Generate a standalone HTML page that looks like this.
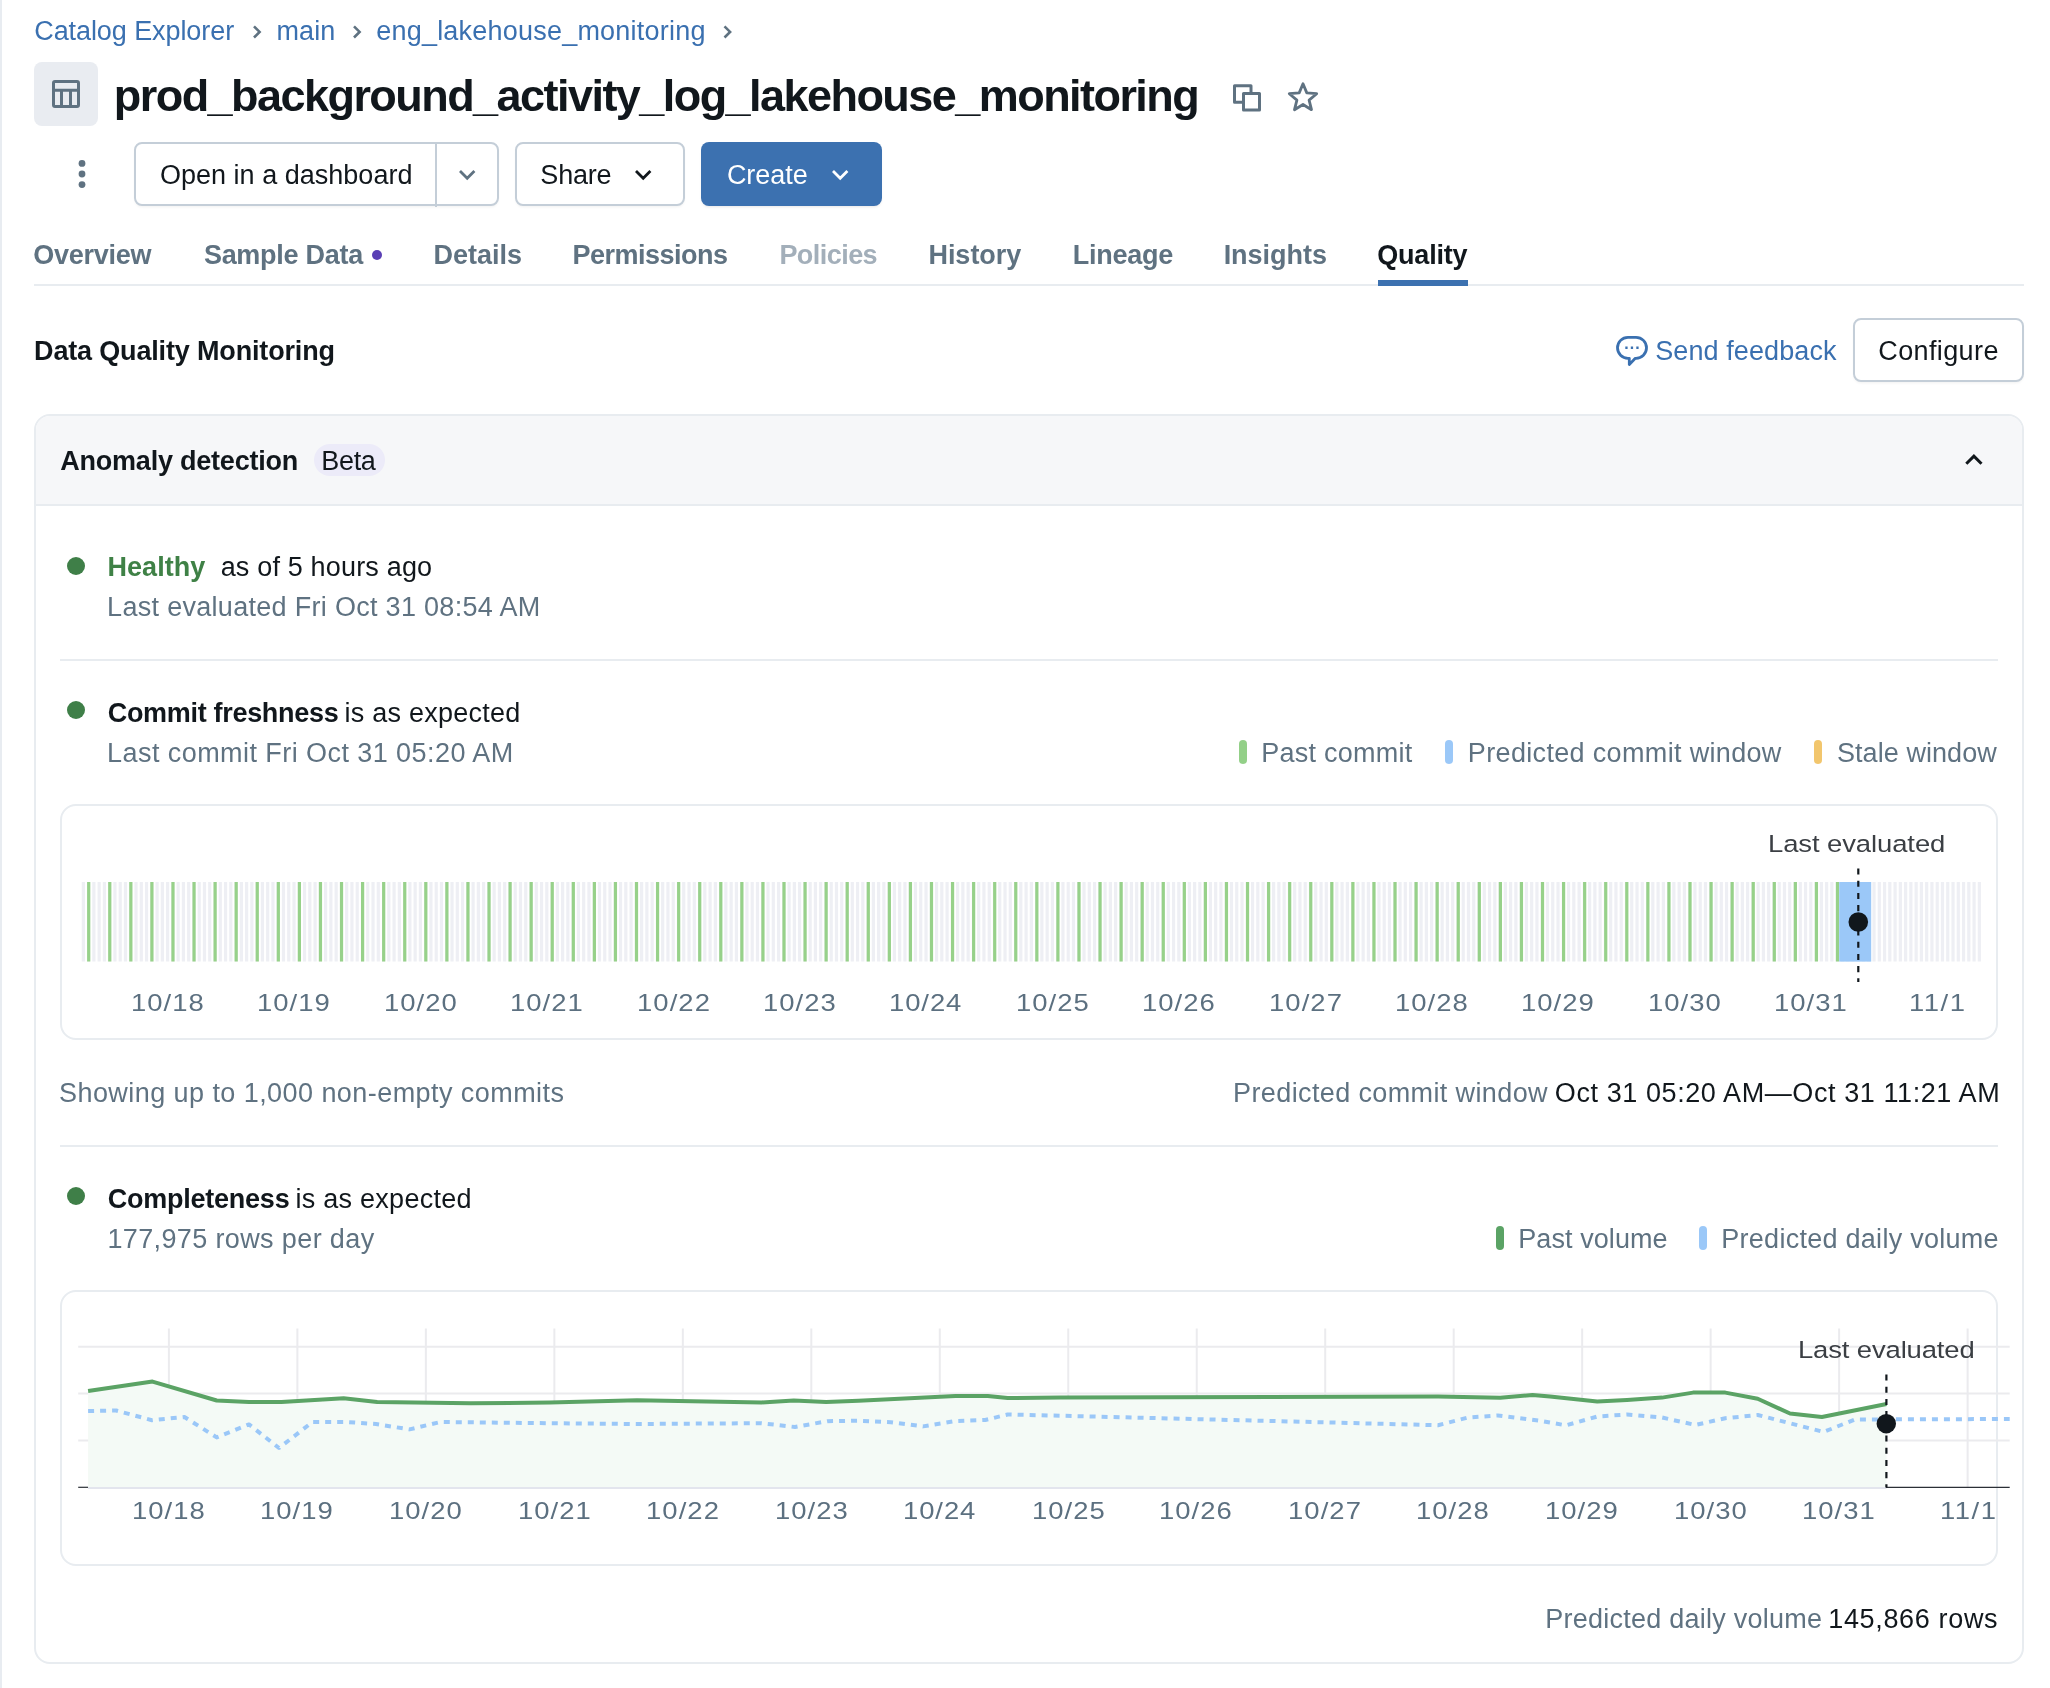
<!DOCTYPE html>
<html lang="en"><head><meta charset="utf-8"><title>Catalog Explorer - Quality</title>
<style>
html,body{margin:0;padding:0;}
body{width:2050px;height:1688px;position:relative;overflow:hidden;background:#fff;font-family:"Liberation Sans", sans-serif;}
.t{position:absolute;white-space:pre;}
.abs{position:absolute;box-sizing:border-box;}
.btn{position:absolute;box-sizing:border-box;border:2px solid #c4ced8;border-radius:8px;background:#fff;box-shadow:0 2px 3px -1px rgba(0,0,0,.06);}
.pill{position:absolute;width:8px;height:24px;border-radius:4px;}
.dot{position:absolute;width:18px;height:18px;border-radius:50%;background:#3f7f48;}
.sep{position:absolute;left:60px;width:1938px;height:2px;background:#e8ecf0;}
svg{position:absolute;left:0;top:0;overflow:visible;}
</style></head>
<body>
<div class="abs" style="left:0;top:0;width:2px;height:1688px;background:#e8ecf1"></div>

<!-- breadcrumb chevrons -->
<svg width="2050" height="60" viewBox="0 0 2050 60" fill="none" stroke="#5f7281" stroke-width="2.6" stroke-linecap="butt" stroke-linejoin="miter">
<path d="M254 26.3l5.6 5.6-5.6 5.6"/><path d="M354 26.3l5.6 5.6-5.6 5.6"/><path d="M724.5 26.3l5.6 5.6-5.6 5.6"/>
</svg>

<!-- title row -->
<div class="abs" style="left:34px;top:62px;width:64px;height:64px;border-radius:8px;background:#e9ecf1"></div>
<svg width="2050" height="140" viewBox="0 0 2050 140" fill="none" stroke="#5f7281" stroke-width="3">
<rect x="53.5" y="81.5" width="25" height="25" rx="1.5"/><path d="M53.5 90.300H78.5M61.5 90.300V106.5M70.5 90.300V106.5"/>
<path d="M1251 92V85.8H1234.5V102.3H1242" stroke-width="3" stroke-linejoin="round"/><rect x="1243.5" y="93.5" width="16" height="16.5" stroke-width="3" stroke-linejoin="round"/>
<path d="M1303.0 83.7L1306.8 92.9L1316.7 93.7L1309.1 100.1L1311.5 109.7L1303.0 104.5L1294.5 109.7L1296.9 100.1L1289.3 93.7L1299.2 92.9z" stroke-width="2.8" stroke-linejoin="round"/>
</svg>

<!-- action row -->
<svg width="200" height="220" viewBox="0 0 200 220"><circle cx="82" cy="163.4" r="3.4" fill="#5f7281"/><circle cx="82" cy="174" r="3.4" fill="#5f7281"/><circle cx="82" cy="184.6" r="3.4" fill="#5f7281"/></svg>
<div class="btn" style="left:134px;top:142px;width:365px;height:64px"></div>
<div class="abs" style="left:435px;top:144px;width:2px;height:63px;background:#c4ced8"></div>
<div class="btn" style="left:515px;top:142px;width:170px;height:64px"></div>
<div class="abs" style="left:701px;top:142px;width:181px;height:64px;border-radius:8px;background:#3c71b0;box-shadow:0 2px 3px -1px rgba(0,0,0,.1)"></div>
<svg width="2050" height="220" viewBox="0 0 2050 220" fill="none" stroke-width="2.8">
<path d="M460 171l7.2 7.2 7.2-7.2" stroke="#5f7281"/>
<path d="M636 171l7.2 7.2 7.2-7.2" stroke="#11171c"/>
<path d="M833 171l7.2 7.2 7.2-7.2" stroke="#fff"/>
</svg>

<!-- tabs -->
<div class="abs" style="left:34px;top:284px;width:1990px;height:2px;background:#e8ecf0"></div>
<div class="abs" style="left:1378px;top:280px;width:90px;height:6px;background:#3c71b0"></div>
<div class="abs" style="left:372px;top:250px;width:10px;height:10px;border-radius:50%;background:#5a3fb5"></div>

<!-- section header -->
<svg width="2050" height="400" viewBox="0 0 2050 400" fill="none" stroke="#3a70b0" stroke-width="2.8" stroke-linejoin="round">
<path d="M1628 337.300H1636a10.500 10.500 0 0 1 0 21H1635.300L1629.300 364.600V358.300H1628a10.500 10.500 0 0 1 0-21z"/>
<path d="M1625.300 347.800h2.300M1630.800 347.800h2.300M1636.300 347.800h2.300" stroke-width="2.400"/>
</svg>
<div class="btn" style="left:1853px;top:318px;width:171px;height:64px"></div>

<!-- card -->
<div class="abs" style="left:34px;top:414px;width:1990px;height:1250px;border:2px solid #e8ecf0;border-radius:16px;background:#fff;overflow:hidden">
<div class="abs" style="left:0;top:0;width:1986px;height:90px;background:#f6f7f9;border-bottom:2px solid #e8ecf0"></div>
</div>
<div class="abs" style="left:314px;top:444px;width:71px;height:32px;border-radius:16px;background:#ecebf9"></div>
<svg width="2050" height="500" viewBox="0 0 2050 500" fill="none" stroke="#11171c" stroke-width="3"><path d="M1966.3 463.8l7.600-7.600 7.600 7.600"/></svg>

<div class="dot" style="left:67px;top:557px"></div>
<div class="sep" style="top:659px"></div>
<div class="dot" style="left:67px;top:701px"></div>
<div class="pill" style="left:1239px;top:740px;background:#93d088"></div>
<div class="pill" style="left:1444.700px;top:740px;background:#9bc8f8"></div>
<div class="pill" style="left:1813.700px;top:740px;background:#f2c66d"></div>

<!-- chart 1 -->
<div class="abs" style="left:60px;top:804px;width:1938px;height:236px;border:2px solid #e8ecf0;border-radius:16px"></div>
<svg width="2050" height="1688" viewBox="0 0 2050 1688">
<path d="M83.35 882V961.6M88.62 882V961.6M93.88 882V961.6M99.15 882V961.6M104.42 882V961.6M109.68 882V961.6M114.95 882V961.6M120.22 882V961.6M125.48 882V961.6M130.75 882V961.6M136.02 882V961.6M141.28 882V961.6M146.55 882V961.6M151.82 882V961.6M157.08 882V961.6M162.35 882V961.6M167.62 882V961.6M172.88 882V961.6M178.15 882V961.6M183.42 882V961.6M188.68 882V961.6M193.95 882V961.6M199.22 882V961.6M204.48 882V961.6M209.75 882V961.6M215.02 882V961.6M220.28 882V961.6M225.55 882V961.6M230.82 882V961.6M236.08 882V961.6M241.35 882V961.6M246.62 882V961.6M251.88 882V961.6M257.15 882V961.6M262.42 882V961.6M267.68 882V961.6M272.95 882V961.6M278.22 882V961.6M283.48 882V961.6M288.75 882V961.6M294.02 882V961.6M299.28 882V961.6M304.55 882V961.6M309.82 882V961.6M315.08 882V961.6M320.35 882V961.6M325.62 882V961.6M330.88 882V961.6M336.15 882V961.6M341.42 882V961.6M346.68 882V961.6M351.95 882V961.6M357.22 882V961.6M362.48 882V961.6M367.75 882V961.6M373.02 882V961.6M378.28 882V961.6M383.55 882V961.6M388.82 882V961.6M394.08 882V961.6M399.35 882V961.6M404.62 882V961.6M409.88 882V961.6M415.15 882V961.6M420.42 882V961.6M425.68 882V961.6M430.95 882V961.6M436.22 882V961.6M441.48 882V961.6M446.75 882V961.6M452.02 882V961.6M457.28 882V961.6M462.55 882V961.6M467.82 882V961.6M473.08 882V961.6M478.35 882V961.6M483.62 882V961.6M488.88 882V961.6M494.15 882V961.6M499.42 882V961.6M504.68 882V961.6M509.95 882V961.6M515.22 882V961.6M520.48 882V961.6M525.75 882V961.6M531.02 882V961.6M536.28 882V961.6M541.55 882V961.6M546.82 882V961.6M552.08 882V961.6M557.35 882V961.6M562.62 882V961.6M567.88 882V961.6M573.15 882V961.6M578.42 882V961.6M583.68 882V961.6M588.95 882V961.6M594.22 882V961.6M599.48 882V961.6M604.75 882V961.6M610.02 882V961.6M615.28 882V961.6M620.55 882V961.6M625.82 882V961.6M631.08 882V961.6M636.35 882V961.6M641.62 882V961.6M646.88 882V961.6M652.15 882V961.6M657.42 882V961.6M662.68 882V961.6M667.95 882V961.6M673.22 882V961.6M678.48 882V961.6M683.75 882V961.6M689.02 882V961.6M694.28 882V961.6M699.55 882V961.6M704.82 882V961.6M710.08 882V961.6M715.35 882V961.6M720.62 882V961.6M725.88 882V961.6M731.15 882V961.6M736.42 882V961.6M741.68 882V961.6M746.95 882V961.6M752.22 882V961.6M757.48 882V961.6M762.75 882V961.6M768.02 882V961.6M773.28 882V961.6M778.55 882V961.6M783.82 882V961.6M789.08 882V961.6M794.35 882V961.6M799.62 882V961.6M804.88 882V961.6M810.15 882V961.6M815.42 882V961.6M820.68 882V961.6M825.95 882V961.6M831.22 882V961.6M836.48 882V961.6M841.75 882V961.6M847.02 882V961.6M852.28 882V961.6M857.55 882V961.6M862.82 882V961.6M868.08 882V961.6M873.35 882V961.6M878.62 882V961.6M883.88 882V961.6M889.15 882V961.6M894.42 882V961.6M899.68 882V961.6M904.95 882V961.6M910.22 882V961.6M915.48 882V961.6M920.75 882V961.6M926.02 882V961.6M931.28 882V961.6M936.55 882V961.6M941.82 882V961.6M947.08 882V961.6M952.35 882V961.6M957.62 882V961.6M962.88 882V961.6M968.15 882V961.6M973.42 882V961.6M978.68 882V961.6M983.95 882V961.6M989.22 882V961.6M994.48 882V961.6M999.75 882V961.6M1005.02 882V961.6M1010.28 882V961.6M1015.55 882V961.6M1020.82 882V961.6M1026.08 882V961.6M1031.35 882V961.6M1036.62 882V961.6M1041.88 882V961.6M1047.15 882V961.6M1052.42 882V961.6M1057.68 882V961.6M1062.95 882V961.6M1068.22 882V961.6M1073.48 882V961.6M1078.75 882V961.6M1084.02 882V961.6M1089.28 882V961.6M1094.55 882V961.6M1099.82 882V961.6M1105.08 882V961.6M1110.35 882V961.6M1115.62 882V961.6M1120.88 882V961.6M1126.15 882V961.6M1131.42 882V961.6M1136.68 882V961.6M1141.95 882V961.6M1147.22 882V961.6M1152.48 882V961.6M1157.75 882V961.6M1163.02 882V961.6M1168.28 882V961.6M1173.55 882V961.6M1178.82 882V961.6M1184.08 882V961.6M1189.35 882V961.6M1194.62 882V961.6M1199.88 882V961.6M1205.15 882V961.6M1210.42 882V961.6M1215.68 882V961.6M1220.95 882V961.6M1226.22 882V961.6M1231.48 882V961.6M1236.75 882V961.6M1242.02 882V961.6M1247.28 882V961.6M1252.55 882V961.6M1257.82 882V961.6M1263.08 882V961.6M1268.35 882V961.6M1273.62 882V961.6M1278.88 882V961.6M1284.15 882V961.6M1289.42 882V961.6M1294.68 882V961.6M1299.95 882V961.6M1305.22 882V961.6M1310.48 882V961.6M1315.75 882V961.6M1321.02 882V961.6M1326.28 882V961.6M1331.55 882V961.6M1336.82 882V961.6M1342.08 882V961.6M1347.35 882V961.6M1352.62 882V961.6M1357.88 882V961.6M1363.15 882V961.6M1368.42 882V961.6M1373.68 882V961.6M1378.95 882V961.6M1384.22 882V961.6M1389.48 882V961.6M1394.75 882V961.6M1400.02 882V961.6M1405.28 882V961.6M1410.55 882V961.6M1415.82 882V961.6M1421.08 882V961.6M1426.35 882V961.6M1431.62 882V961.6M1436.88 882V961.6M1442.15 882V961.6M1447.42 882V961.6M1452.68 882V961.6M1457.95 882V961.6M1463.22 882V961.6M1468.48 882V961.6M1473.75 882V961.6M1479.02 882V961.6M1484.28 882V961.6M1489.55 882V961.6M1494.82 882V961.6M1500.08 882V961.6M1505.35 882V961.6M1510.62 882V961.6M1515.88 882V961.6M1521.15 882V961.6M1526.42 882V961.6M1531.68 882V961.6M1536.95 882V961.6M1542.22 882V961.6M1547.48 882V961.6M1552.75 882V961.6M1558.02 882V961.6M1563.28 882V961.6M1568.55 882V961.6M1573.82 882V961.6M1579.08 882V961.6M1584.35 882V961.6M1589.62 882V961.6M1594.88 882V961.6M1600.15 882V961.6M1605.42 882V961.6M1610.68 882V961.6M1615.95 882V961.6M1621.22 882V961.6M1626.48 882V961.6M1631.75 882V961.6M1637.02 882V961.6M1642.28 882V961.6M1647.55 882V961.6M1652.82 882V961.6M1658.08 882V961.6M1663.35 882V961.6M1668.62 882V961.6M1673.88 882V961.6M1679.15 882V961.6M1684.42 882V961.6M1689.68 882V961.6M1694.95 882V961.6M1700.22 882V961.6M1705.48 882V961.6M1710.75 882V961.6M1716.02 882V961.6M1721.28 882V961.6M1726.55 882V961.6M1731.82 882V961.6M1737.08 882V961.6M1742.35 882V961.6M1747.62 882V961.6M1752.88 882V961.6M1758.15 882V961.6M1763.42 882V961.6M1768.68 882V961.6M1773.95 882V961.6M1779.22 882V961.6M1784.48 882V961.6M1789.75 882V961.6M1795.02 882V961.6M1800.28 882V961.6M1805.55 882V961.6M1810.82 882V961.6M1816.08 882V961.6M1821.35 882V961.6M1826.62 882V961.6M1831.88 882V961.6M1837.15 882V961.6M1842.42 882V961.6M1847.68 882V961.6M1852.95 882V961.6M1858.22 882V961.6M1863.48 882V961.6M1868.75 882V961.6M1874.02 882V961.6M1879.28 882V961.6M1884.55 882V961.6M1889.82 882V961.6M1895.08 882V961.6M1900.35 882V961.6M1905.62 882V961.6M1910.88 882V961.6M1916.15 882V961.6M1921.42 882V961.6M1926.68 882V961.6M1931.95 882V961.6M1937.22 882V961.6M1942.48 882V961.6M1947.75 882V961.6M1953.02 882V961.6M1958.28 882V961.6M1963.55 882V961.6M1968.82 882V961.6M1974.08 882V961.6M1979.35 882V961.6" stroke="#eeeff4" stroke-width="3.2" fill="none"/>
<path d="M88.70 882V961.6M109.77 882V961.6M130.84 882V961.6M151.91 882V961.6M172.98 882V961.6M194.05 882V961.6M215.12 882V961.6M236.19 882V961.6M257.26 882V961.6M278.33 882V961.6M299.40 882V961.6M320.47 882V961.6M341.54 882V961.6M362.61 882V961.6M383.68 882V961.6M404.75 882V961.6M425.82 882V961.6M446.89 882V961.6M467.96 882V961.6M489.03 882V961.6M510.10 882V961.6M531.17 882V961.6M552.24 882V961.6M573.31 882V961.6M594.38 882V961.6M615.45 882V961.6M636.52 882V961.6M657.59 882V961.6M678.66 882V961.6M699.73 882V961.6M720.80 882V961.6M741.87 882V961.6M762.94 882V961.6M784.01 882V961.6M805.08 882V961.6M826.15 882V961.6M847.22 882V961.6M868.29 882V961.6M889.36 882V961.6M910.43 882V961.6M931.50 882V961.6M952.57 882V961.6M973.64 882V961.6M994.71 882V961.6M1015.78 882V961.6M1036.85 882V961.6M1057.92 882V961.6M1078.99 882V961.6M1100.06 882V961.6M1121.13 882V961.6M1142.20 882V961.6M1163.27 882V961.6M1184.34 882V961.6M1205.41 882V961.6M1226.48 882V961.6M1247.55 882V961.6M1268.62 882V961.6M1289.69 882V961.6M1310.76 882V961.6M1331.83 882V961.6M1352.90 882V961.6M1373.97 882V961.6M1395.04 882V961.6M1416.11 882V961.6M1437.18 882V961.6M1458.25 882V961.6M1479.32 882V961.6M1500.39 882V961.6M1521.46 882V961.6M1542.53 882V961.6M1563.60 882V961.6M1584.67 882V961.6M1605.74 882V961.6M1626.81 882V961.6M1647.88 882V961.6M1668.95 882V961.6M1690.02 882V961.6M1711.09 882V961.6M1732.16 882V961.6M1753.23 882V961.6M1774.30 882V961.6M1795.37 882V961.6M1816.44 882V961.6M1837.51 882V961.6" stroke="#97d18a" stroke-width="3.2" fill="none"/>
<rect x="1839.2" y="882" width="32" height="79.6" fill="#9bc8f8"/>
<path d="M1858.3 868.5V982" stroke="#11171c" stroke-width="2.2" stroke-dasharray="6.1 6.1" fill="none"/>
<circle cx="1858.3" cy="922" r="9.8" fill="#11171c"/>
</svg>

<div class="sep" style="top:1145px"></div>
<div class="dot" style="left:67px;top:1187px"></div>
<div class="pill" style="left:1496px;top:1226px;background:#5ba365"></div>
<div class="pill" style="left:1699px;top:1226px;background:#9bc8f8"></div>

<!-- chart 2 -->
<div class="abs" style="left:60px;top:1290px;width:1938px;height:276px;border:2px solid #e8ecf0;border-radius:16px"></div>
<svg width="2050" height="1688" viewBox="0 0 2050 1688">
<path d="M168.90 1328.5V1487.5M297.38 1328.5V1487.5M425.86 1328.5V1487.5M554.34 1328.5V1487.5M682.82 1328.5V1487.5M811.30 1328.5V1487.5M939.78 1328.5V1487.5M1068.26 1328.5V1487.5M1196.74 1328.5V1487.5M1325.22 1328.5V1487.5M1453.70 1328.5V1487.5M1582.18 1328.5V1487.5M1710.66 1328.5V1487.5M1839.14 1328.5V1487.5M1967.62 1328.5V1487.5M78.2 1346.8H2009.7M78.2 1393.6H2009.7M78.2 1440.4H2009.7" stroke="#ebebee" stroke-width="2" fill="none"/>
<polygon points="88.1,1391.1 152.5,1381.6 216.7,1400.5 249.0,1402.0 281.4,1402.0 343.6,1398.3 377.2,1402.0 470.5,1403.3 550.0,1402.5 637.0,1400.3 761.5,1402.5 793.8,1400.5 826.1,1402.0 858.5,1400.8 955.5,1396.0 987.8,1396.0 1007.7,1398.0 1060.0,1397.5 1438.0,1396.6 1500.2,1397.8 1532.5,1395.0 1550.0,1396.6 1597.2,1401.5 1627.0,1400.0 1662.0,1397.6 1693.0,1392.6 1725.3,1392.6 1757.7,1398.8 1790.0,1413.5 1821.9,1417.0 1886.5,1404.0 1886.5,1487.5 88.1,1487.5" fill="#f4faf6"/>
<path d="M88 1488H1886.5" stroke="#e3e5ee" stroke-width="2" fill="none"/>
<path d="M78.2 1487.3H88" stroke="#2b2f36" stroke-width="1.2" fill="none"/>
<path d="M1886 1487.4H2009.7" stroke="#2b2f36" stroke-width="1.4" fill="none"/>
<polyline points="88.1,1411.0 116.0,1410.5 152.0,1420.2 184.4,1417.0 216.7,1437.4 249.0,1424.4 279.0,1448.0 312.5,1422.0 346.0,1422.0 376.0,1424.0 409.5,1429.4 440.6,1422.0 550.0,1423.2 637.0,1424.0 761.5,1423.2 795.0,1427.0 827.4,1421.2 858.5,1420.7 890.8,1422.2 923.0,1426.4 955.5,1421.0 985.3,1420.0 1007.7,1414.5 1060.0,1415.7 1438.0,1425.2 1467.9,1417.5 1497.7,1415.5 1540.0,1420.7 1566.0,1425.4 1597.2,1416.5 1627.0,1414.5 1662.0,1417.5 1695.5,1425.0 1725.3,1418.2 1757.7,1415.0 1790.0,1423.2 1823.6,1432.0 1854.7,1419.5 2009.7,1419.0" stroke="#9ac7f8" stroke-width="4" stroke-dasharray="6 6" fill="none" stroke-linejoin="round"/>
<polyline points="88.1,1391.1 152.5,1381.6 216.7,1400.5 249.0,1402.0 281.4,1402.0 343.6,1398.3 377.2,1402.0 470.5,1403.3 550.0,1402.5 637.0,1400.3 761.5,1402.5 793.8,1400.5 826.1,1402.0 858.5,1400.8 955.5,1396.0 987.8,1396.0 1007.7,1398.0 1060.0,1397.5 1438.0,1396.6 1500.2,1397.8 1532.5,1395.0 1550.0,1396.6 1597.2,1401.5 1627.0,1400.0 1662.0,1397.6 1693.0,1392.6 1725.3,1392.6 1757.7,1398.8 1790.0,1413.5 1821.9,1417.0 1886.5,1404.0" stroke="#5ba365" stroke-width="4" fill="none" stroke-linejoin="round"/>
<path d="M1886.4 1374.5V1487.5" stroke="#11171c" stroke-width="2.2" stroke-dasharray="6.1 6.1" fill="none"/>
<circle cx="1886.3" cy="1423.7" r="9.7" fill="#11171c"/>
</svg>

<!-- text -->
<div class="abs" style="left:0;top:0;width:2050px;height:1688px;will-change:transform">
<span class="t" style="left:34.25px;top:18px;font-size:27px;line-height:27px;letter-spacing:-0.082px;color:#3a70b0;">Catalog Explorer</span>
<span class="t" style="left:276.38px;top:18px;font-size:27px;line-height:27px;letter-spacing:0.158px;color:#3a70b0;">main</span>
<span class="t" style="left:376.23px;top:18px;font-size:27px;line-height:27px;letter-spacing:0.215px;color:#3a70b0;">eng_lakehouse_monitoring</span>
<span class="t" style="left:113.82px;top:73px;font-size:45px;line-height:45px;letter-spacing:-1.548px;color:#11171c;font-weight:700;">prod_background_activity_log_lakehouse_monitoring</span>
<span class="t" style="left:159.96px;top:162px;font-size:27px;line-height:27px;letter-spacing:0.017px;color:#11171c;">Open in a dashboard</span>
<span class="t" style="left:540.36px;top:162px;font-size:27px;line-height:27px;letter-spacing:-0.203px;color:#11171c;">Share</span>
<span class="t" style="left:726.89px;top:162px;font-size:27px;line-height:27px;letter-spacing:-0.010px;color:#ffffff;">Create</span>
<span class="t" style="left:33.27px;top:242px;font-size:27px;line-height:27px;letter-spacing:-0.264px;color:#5f7281;font-weight:700;">Overview</span>
<span class="t" style="left:203.90px;top:242px;font-size:27px;line-height:27px;letter-spacing:-0.273px;color:#5f7281;font-weight:700;">Sample Data</span>
<span class="t" style="left:433.40px;top:242px;font-size:27px;line-height:27px;letter-spacing:0.025px;color:#5f7281;font-weight:700;">Details</span>
<span class="t" style="left:572.40px;top:242px;font-size:27px;line-height:27px;letter-spacing:-0.503px;color:#5f7281;font-weight:700;">Permissions</span>
<span class="t" style="left:779.40px;top:242px;font-size:27px;line-height:27px;letter-spacing:-0.544px;color:#a3afba;font-weight:700;">Policies</span>
<span class="t" style="left:928.40px;top:242px;font-size:27px;line-height:27px;letter-spacing:-0.010px;color:#5f7281;font-weight:700;">History</span>
<span class="t" style="left:1072.65px;top:242px;font-size:27px;line-height:27px;letter-spacing:-0.227px;color:#5f7281;font-weight:700;">Lineage</span>
<span class="t" style="left:1223.63px;top:242px;font-size:27px;line-height:27px;letter-spacing:-0.006px;color:#5f7281;font-weight:700;">Insights</span>
<span class="t" style="left:1377.27px;top:242px;font-size:27px;line-height:27px;letter-spacing:-0.193px;color:#11171c;font-weight:700;">Quality</span>
<span class="t" style="left:34.07px;top:338px;font-size:27px;line-height:27px;letter-spacing:-0.164px;color:#11171c;font-weight:700;">Data Quality Monitoring</span>
<span class="t" style="left:1655.18px;top:338px;font-size:27px;line-height:27px;letter-spacing:0.103px;color:#3a70b0;">Send feedback</span>
<span class="t" style="left:1878.25px;top:338px;font-size:27px;line-height:27px;letter-spacing:0.384px;color:#11171c;">Configure</span>
<span class="t" style="left:60.19px;top:448px;font-size:27px;line-height:27px;letter-spacing:-0.213px;color:#11171c;font-weight:700;">Anomaly detection</span>
<span class="t" style="left:321.29px;top:448px;font-size:27px;line-height:27px;letter-spacing:-0.330px;color:#11171c;">Beta</span>
<span class="t" style="left:107.40px;top:554px;font-size:27px;line-height:27px;letter-spacing:0.072px;color:#3f8146;font-weight:700;">Healthy</span>
<span class="t" style="left:220.65px;top:554px;font-size:27px;line-height:27px;letter-spacing:0.176px;color:#11171c;">as of 5 hours ago</span>
<span class="t" style="left:107.12px;top:594px;font-size:27px;line-height:27px;letter-spacing:0.299px;color:#5f7281;">Last evaluated Fri Oct 31 08:54 AM</span>
<span class="t" style="left:107.72px;top:700px;font-size:27px;line-height:27px;letter-spacing:-0.309px;color:#11171c;font-weight:700;">Commit freshness</span>
<span class="t" style="left:344.40px;top:700px;font-size:27px;line-height:27px;letter-spacing:0.248px;color:#11171c;">is as expected</span>
<span class="t" style="left:107.12px;top:740px;font-size:27px;line-height:27px;letter-spacing:0.432px;color:#5f7281;">Last commit Fri Oct 31 05:20 AM</span>
<span class="t" style="left:1261.20px;top:740px;font-size:27px;line-height:27px;letter-spacing:0.258px;color:#5f7281;">Past commit</span>
<span class="t" style="left:1467.87px;top:740px;font-size:27px;line-height:27px;letter-spacing:0.336px;color:#5f7281;">Predicted commit window</span>
<span class="t" style="left:1836.99px;top:740px;font-size:27px;line-height:27px;letter-spacing:0.059px;color:#5f7281;">Stale window</span>
<span class="t" style="left:1768.47px;top:832px;font-size:24.5px;line-height:24.5px;letter-spacing:-0.080px;color:#3b3f44;transform-origin:0 0;transform:scaleX(1.12);">Last evaluated</span>
<span class="t" style="left:130.53px;top:991px;font-size:24.5px;line-height:24.5px;letter-spacing:0.918px;color:#5c7080;transform-origin:0 0;transform:scaleX(1.12);">10/18</span>
<span class="t" style="left:257.13px;top:991px;font-size:24.5px;line-height:24.5px;letter-spacing:0.913px;color:#5c7080;transform-origin:0 0;transform:scaleX(1.12);">10/19</span>
<span class="t" style="left:383.73px;top:991px;font-size:24.5px;line-height:24.5px;letter-spacing:0.895px;color:#5c7080;transform-origin:0 0;transform:scaleX(1.12);">10/20</span>
<span class="t" style="left:510.33px;top:991px;font-size:24.5px;line-height:24.5px;letter-spacing:0.929px;color:#5c7080;transform-origin:0 0;transform:scaleX(1.12);">10/21</span>
<span class="t" style="left:636.93px;top:991px;font-size:24.5px;line-height:24.5px;letter-spacing:0.947px;color:#5c7080;transform-origin:0 0;transform:scaleX(1.12);">10/22</span>
<span class="t" style="left:762.53px;top:991px;font-size:24.5px;line-height:24.5px;letter-spacing:0.935px;color:#5c7080;transform-origin:0 0;transform:scaleX(1.12);">10/23</span>
<span class="t" style="left:889.13px;top:991px;font-size:24.5px;line-height:24.5px;letter-spacing:0.827px;color:#5c7080;transform-origin:0 0;transform:scaleX(1.12);">10/24</span>
<span class="t" style="left:1015.73px;top:991px;font-size:24.5px;line-height:24.5px;letter-spacing:0.898px;color:#5c7080;transform-origin:0 0;transform:scaleX(1.12);">10/25</span>
<span class="t" style="left:1142.33px;top:991px;font-size:24.5px;line-height:24.5px;letter-spacing:0.926px;color:#5c7080;transform-origin:0 0;transform:scaleX(1.12);">10/26</span>
<span class="t" style="left:1268.93px;top:991px;font-size:24.5px;line-height:24.5px;letter-spacing:0.947px;color:#5c7080;transform-origin:0 0;transform:scaleX(1.12);">10/27</span>
<span class="t" style="left:1394.53px;top:991px;font-size:24.5px;line-height:24.5px;letter-spacing:0.918px;color:#5c7080;transform-origin:0 0;transform:scaleX(1.12);">10/28</span>
<span class="t" style="left:1521.13px;top:991px;font-size:24.5px;line-height:24.5px;letter-spacing:0.913px;color:#5c7080;transform-origin:0 0;transform:scaleX(1.12);">10/29</span>
<span class="t" style="left:1647.73px;top:991px;font-size:24.5px;line-height:24.5px;letter-spacing:0.895px;color:#5c7080;transform-origin:0 0;transform:scaleX(1.12);">10/30</span>
<span class="t" style="left:1774.33px;top:991px;font-size:24.5px;line-height:24.5px;letter-spacing:0.929px;color:#5c7080;transform-origin:0 0;transform:scaleX(1.12);">10/31</span>
<span class="t" style="left:1908.53px;top:991px;font-size:24.5px;line-height:24.5px;letter-spacing:1.391px;color:#5c7080;transform-origin:0 0;transform:scaleX(1.12);">11/1</span>
<span class="t" style="left:58.99px;top:1080px;font-size:27px;line-height:27px;letter-spacing:0.437px;color:#5f7281;">Showing up to 1,000 non-empty commits</span>
<span class="t" style="left:1233.12px;top:1080px;font-size:27px;line-height:27px;letter-spacing:0.379px;color:#5f7281;">Predicted commit window</span>
<span class="t" style="left:1554.82px;top:1080px;font-size:27px;line-height:27px;letter-spacing:0.587px;color:#11171c;">Oct 31 05:20 AM—Oct 31 11:21 AM</span>
<span class="t" style="left:107.72px;top:1186px;font-size:27px;line-height:27px;letter-spacing:-0.238px;color:#11171c;font-weight:700;">Completeness</span>
<span class="t" style="left:295.40px;top:1186px;font-size:27px;line-height:27px;letter-spacing:0.271px;color:#11171c;">is as expected</span>
<span class="t" style="left:107.45px;top:1226px;font-size:27px;line-height:27px;letter-spacing:0.370px;color:#5f7281;">177,975 rows per day</span>
<span class="t" style="left:1518.29px;top:1226px;font-size:27px;line-height:27px;letter-spacing:0.075px;color:#5f7281;">Past volume</span>
<span class="t" style="left:1721.29px;top:1226px;font-size:27px;line-height:27px;letter-spacing:0.270px;color:#5f7281;">Predicted daily volume</span>
<span class="t" style="left:1797.67px;top:1338px;font-size:24.5px;line-height:24.5px;letter-spacing:-0.123px;color:#3b3f44;transform-origin:0 0;transform:scaleX(1.12);">Last evaluated</span>
<span class="t" style="left:132.13px;top:1499px;font-size:24.5px;line-height:24.5px;letter-spacing:0.918px;color:#5c7080;transform-origin:0 0;transform:scaleX(1.12);">10/18</span>
<span class="t" style="left:260.05px;top:1499px;font-size:24.5px;line-height:24.5px;letter-spacing:0.913px;color:#5c7080;transform-origin:0 0;transform:scaleX(1.12);">10/19</span>
<span class="t" style="left:388.97px;top:1499px;font-size:24.5px;line-height:24.5px;letter-spacing:0.895px;color:#5c7080;transform-origin:0 0;transform:scaleX(1.12);">10/20</span>
<span class="t" style="left:517.89px;top:1499px;font-size:24.5px;line-height:24.5px;letter-spacing:0.929px;color:#5c7080;transform-origin:0 0;transform:scaleX(1.12);">10/21</span>
<span class="t" style="left:645.81px;top:1499px;font-size:24.5px;line-height:24.5px;letter-spacing:0.947px;color:#5c7080;transform-origin:0 0;transform:scaleX(1.12);">10/22</span>
<span class="t" style="left:774.73px;top:1499px;font-size:24.5px;line-height:24.5px;letter-spacing:0.935px;color:#5c7080;transform-origin:0 0;transform:scaleX(1.12);">10/23</span>
<span class="t" style="left:902.65px;top:1499px;font-size:24.5px;line-height:24.5px;letter-spacing:0.827px;color:#5c7080;transform-origin:0 0;transform:scaleX(1.12);">10/24</span>
<span class="t" style="left:1031.57px;top:1499px;font-size:24.5px;line-height:24.5px;letter-spacing:0.898px;color:#5c7080;transform-origin:0 0;transform:scaleX(1.12);">10/25</span>
<span class="t" style="left:1159.49px;top:1499px;font-size:24.5px;line-height:24.5px;letter-spacing:0.926px;color:#5c7080;transform-origin:0 0;transform:scaleX(1.12);">10/26</span>
<span class="t" style="left:1288.41px;top:1499px;font-size:24.5px;line-height:24.5px;letter-spacing:0.947px;color:#5c7080;transform-origin:0 0;transform:scaleX(1.12);">10/27</span>
<span class="t" style="left:1416.33px;top:1499px;font-size:24.5px;line-height:24.5px;letter-spacing:0.918px;color:#5c7080;transform-origin:0 0;transform:scaleX(1.12);">10/28</span>
<span class="t" style="left:1545.25px;top:1499px;font-size:24.5px;line-height:24.5px;letter-spacing:0.913px;color:#5c7080;transform-origin:0 0;transform:scaleX(1.12);">10/29</span>
<span class="t" style="left:1674.17px;top:1499px;font-size:24.5px;line-height:24.5px;letter-spacing:0.895px;color:#5c7080;transform-origin:0 0;transform:scaleX(1.12);">10/30</span>
<span class="t" style="left:1802.09px;top:1499px;font-size:24.5px;line-height:24.5px;letter-spacing:0.929px;color:#5c7080;transform-origin:0 0;transform:scaleX(1.12);">10/31</span>
<span class="t" style="left:1939.61px;top:1499px;font-size:24.5px;line-height:24.5px;letter-spacing:1.391px;color:#5c7080;transform-origin:0 0;transform:scaleX(1.12);">11/1</span>
<span class="t" style="left:1545.29px;top:1606px;font-size:27px;line-height:27px;letter-spacing:0.244px;color:#5f7281;">Predicted daily volume</span>
<span class="t" style="left:1828.29px;top:1606px;font-size:27px;line-height:27px;letter-spacing:0.653px;color:#11171c;">145,866 rows</span>
</div>
</body></html>
